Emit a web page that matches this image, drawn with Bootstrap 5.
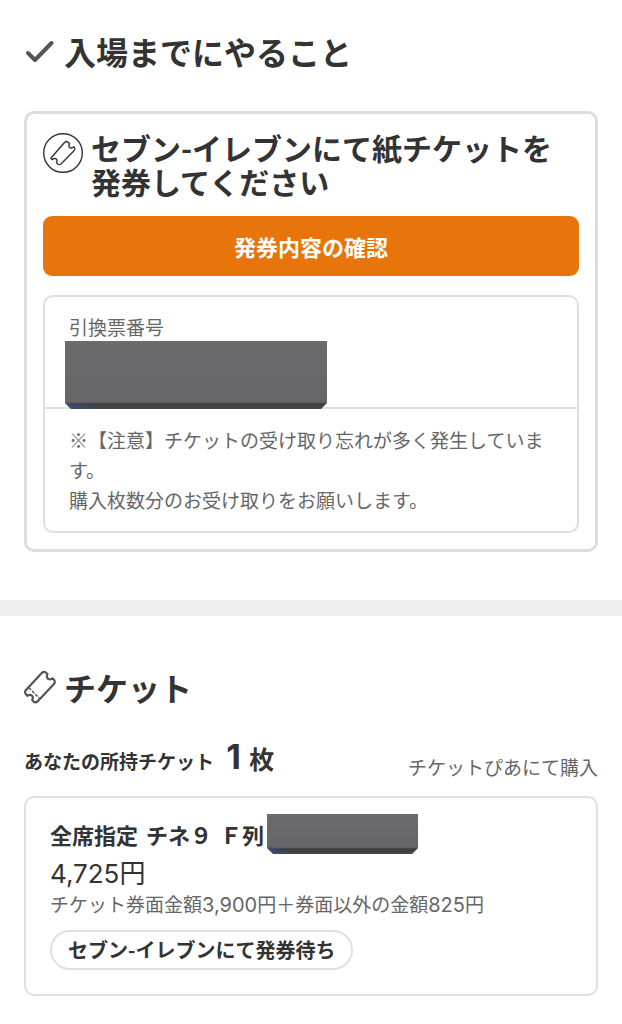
<!DOCTYPE html>
<html lang="ja">
<head>
<meta charset="utf-8">
<meta name="viewport" content="width=device-width, initial-scale=1">
<title>チケット</title>
<link href="https://cdn.jsdelivr.net/npm/bootstrap@5.3.0/dist/css/bootstrap.min.css" rel="stylesheet">
<style>
  body { font-family: "Noto Sans CJK JP", sans-serif; color: #333; background: #fff; font-size: 19px; line-height: 30px; }
  .page-title { font-size: 32px; line-height: 40px; font-weight: 700; }
  .section-pad { padding: 31px 24px 0; }
  .todo-card { border: 3px solid #ddd; border-radius: 10px; margin-top: 40px; padding: 16px; }
  .todo-title { font-size: 30px; line-height: 34px; font-weight: 700; }
  .todo-head { margin-bottom: 18px; }
  .btn-issue, .btn-issue:hover, .btn-issue:active { background: #e8740c !important; color: #fff !important; border: 0; border-radius: 9px; height: 60px; font-size: 22px; font-weight: 700; }
  .thin-box { border: 2px solid #e0e0e0; border-radius: 10px; }
  .issue-box { margin-top: 19px; }
  .muted-text { color: #666; }
  .voucher { padding: 15px 24px 0; border-bottom: 2px solid #e0e0e0; }
  .masked { background: linear-gradient(to right, rgba(60,80,160,.5), rgba(60,80,160,0) 15%) bottom / 100% 6px no-repeat, linear-gradient(#6b6b6d, #666668 calc(100% - 7px), #3c3c3e calc(100% - 5px), #48484a); clip-path: polygon(0 0, 100% 0, 100% calc(100% - 6px), calc(100% - 6px) 100%, 6px 100%, 0 calc(100% - 6px)); position: relative; }
  .masked-number { width: 262px; height: 68px; margin: -1px 0 -2px -4px; }
  .masked-seat { width: 151px; height: 40px; margin-left: 3px; }
  .note { padding: 16px 24px; }
  .band { height: 16px; background: #efefef; }
  .ticket-title { margin-top: 20px; }
  .count-row { margin-top: 30px; }
  .count-num { font-family: Inter, sans-serif; font-size: 34px; line-height: 40px; }
  .count-unit { font-size: 25px; }
  .seller { margin-bottom: -5px; }
  .ticket-card { margin-top: 19px; }
  .seat { font-size: 22px; font-weight: 700; }
  .price { font-family: Inter, "Noto Sans CJK JP", sans-serif; font-size: 26px; line-height: 34px; margin-top: 3px; }
  .price-detail { line-height: 26px; }
  .num { font-family: Inter, sans-serif; font-size: 20px; }
  .status-pill { border: 2px solid #e0e0e0; border-radius: 20px; height: 40px; padding: 0 16px; margin: 12px 0 8px; font-size: 20px; font-weight: 700; }
</style>
</head>
<body>
<main>
  <section class="section-pad pb-5">
    <h1 class="page-title d-flex align-items-center gap-2 mb-0">
      <svg width="32" height="32" viewBox="0 0 32 32" fill="none" stroke="#555" stroke-width="4" stroke-linecap="round" stroke-linejoin="round" aria-hidden="true"><path d="M4 18l7 7L27.500 8"/></svg>
      <span>入場までにやること</span>
    </h1>
    <div class="todo-card">
      <div class="todo-head d-flex gap-2">
        <svg class="flex-shrink-0" width="40" height="44" viewBox="0 0 40 44" fill="none" stroke="#333" stroke-width="1.400" stroke-linejoin="round" aria-hidden="true"><circle cx="20" cy="23" r="19.300"/><path d="M8 28L21.500 12.500Q23.500 10.800 25.200 12.300L26.600 13.800Q25 16.500 27.200 17.800Q29.200 18.600 30.800 16.800L31.500 17.600Q32.500 19 31 20.800L18 34Q16 35.300 14.500 33.800L13.400 32.400Q15 30 12.800 28.700Q10.800 28 9.300 29.600Q7.500 29 8 28Z"/></svg>
        <h2 class="todo-title mb-0">セブン-イレブンにて紙チケットを<br>発券してください</h2>
      </div>
      <button type="button" class="btn btn-issue w-100">発券内容の確認</button>
      <div class="thin-box issue-box muted-text">
        <div class="voucher">
          <div>引換票番号</div>
          <div class="masked masked-number"></div>
        </div>
        <p class="note mb-0">※【注意】チケットの受け取り忘れが多く発生しています。<br>購入枚数分のお受け取りをお願いします。</p>
      </div>
    </div>
  </section>
  <div class="band"></div>
  <section class="section-pad">
    <h2 class="page-title ticket-title d-flex align-items-center gap-2 mb-0">
      <svg width="32" height="34" viewBox="0 0 32 34" fill="none" stroke="#555" stroke-width="2.200" stroke-linejoin="round" aria-hidden="true"><path d="M1.500 20.500L18 2.700Q20 1 21.800 2.500L23.400 4Q22 7.500 24.300 9Q26.500 10 28.500 8.200L30.200 10Q31.500 12 30 14L13.500 31.500Q11.500 33 9.500 31.500L8.200 30Q9.800 27 7.600 25.300Q5.500 24.200 3.200 25.800L1.800 24Q.5 22 1.500 20.500Z"/><path d="M5 17.800L15.500 28.500" stroke-width="1.500" stroke-dasharray="3 1.500"/></svg>
      <span>チケット</span>
    </h2>
    <div class="count-row d-flex justify-content-between align-items-end">
      <div class="fw-bold">あなたの所持チケット <span class="count-num ms-2">1</span> <span class="count-unit ms-1">枚</span></div>
      <div class="seller muted-text">チケットぴあにて購入</div>
    </div>
    <article class="thin-box ticket-card px-4 py-3">
      <div class="d-flex align-items-center">
        <h3 class="seat d-flex gap-2 mb-0"><span>全席指定</span><span>チネ９</span><span>Ｆ列</span></h3>
        <div class="masked masked-seat"></div>
      </div>
      <div class="price">4,725円</div>
      <div class="price-detail muted-text">チケット券面金額<span class="num">3,900</span>円＋券面以外の金額<span class="num">825</span>円</div>
      <div class="status-pill d-inline-flex align-items-center">セブン-イレブンにて発券待ち</div>
    </article>
  </section>
</main>
<script src="https://cdn.jsdelivr.net/npm/bootstrap@5.3.0/dist/js/bootstrap.bundle.min.js"></script>
</body>
</html>
